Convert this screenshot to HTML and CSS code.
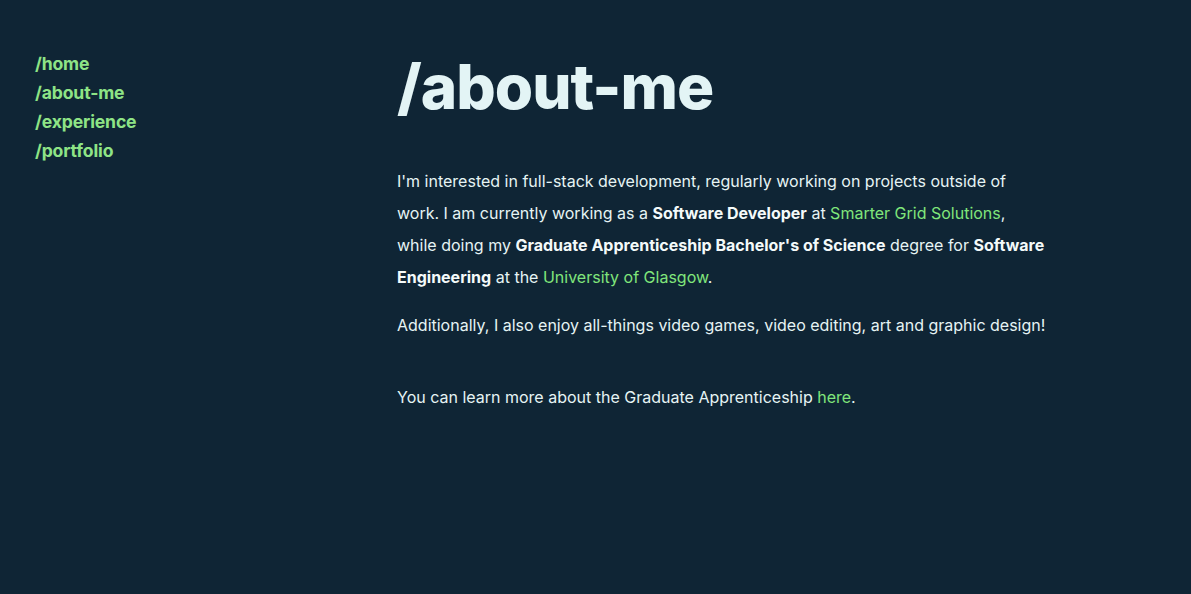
FILE: index.html
```html
<!DOCTYPE html>
<html lang="en">
<head>
<meta charset="utf-8">
<title>about-me</title>
<link rel="stylesheet" href="styles.css">
</head>
<body>
<div class="layout">
  <nav class="nav">
    <a href="#">/home</a>
    <a href="#">/about-me</a>
    <a href="#">/experience</a>
    <a href="#">/portfolio</a>
  </nav>
  <main class="main">
    <h1 class="title">/about-me</h1>
    <div class="content">
      <p>I'm interested in full-stack development, regularly working on projects outside of work. I am currently working as a <b>Software Developer</b> at <a href="#">Smarter Grid Solutions</a>, while doing my <b>Graduate Apprenticeship Bachelor's of Science</b> degree for <b>Software Engineering</b> at the <a href="#">University of Glasgow</a>.</p>
      <p>Additionally, I also enjoy all-things video games, video editing, art and graphic design!</p>
      <p class="more">You can learn more about the Graduate Apprenticeship <a href="#">here</a>.</p>
    </div>
  </main>
</div>
</body>
</html>
```
FILE: styles.css
```css
html, body {
  margin: 0;
  padding: 0;
  background: #0f2535;
  height: 100%;
}
body {
  font-family: Inter, "Noto Sans", sans-serif;
  color: #e6f4f4;
}
.layout {
  display: flex;
  padding: 47px 0 0 35px;
}
.nav {
  width: 362px;
  flex: none;
  display: flex;
  flex-direction: column;
  padding-top: 2px;
}
.nav a {
  font-family: Inter, sans-serif;
  font-weight: 700;
  font-size: 17.6px;
  line-height: 29px;
  color: #8ee486;
  text-decoration: none;
  letter-spacing: -0.15px;
}
.main {
  flex: none;
}
.title {
  margin: 0;
  font-size: 62px;
  font-weight: 800;
  line-height: 80px;
  color: #e3f4f5;
  letter-spacing: -1px;
}
.content {
  width: 649px;
  margin-top: 38px;
  font-size: 16px;
  line-height: 32px;
}
.content p {
  margin: 0 0 16px;
}
.content b {
  font-weight: 700;
  color: #f4fafa;
}
.content a {
  color: #80e67b;
  text-decoration: none;
}
.content .more {
  margin-top: 40px;
}
```
